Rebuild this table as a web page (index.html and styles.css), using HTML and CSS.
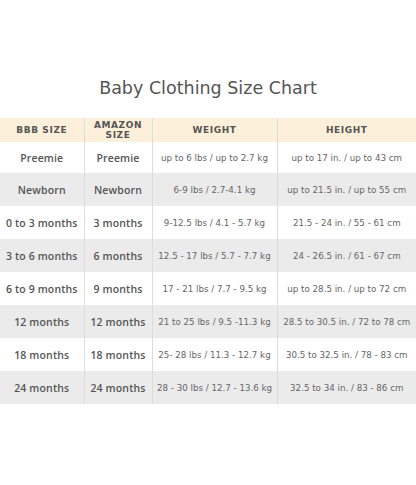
FILE: index.html
```html
<!DOCTYPE html>
<html>
<head>
<meta charset="utf-8">
<link rel="stylesheet" href="styles.css">
</head>
<body>
<div class="page">
  <h1 class="title">Baby Clothing Size Chart</h1>
  <table class="chart">
    <colgroup>
      <col class="c1"><col class="c2"><col class="c3"><col class="c4">
    </colgroup>
    <thead>
      <tr class="head">
        <th>BBB SIZE</th>
        <th>AMAZON<br>SIZE</th>
        <th>WEIGHT</th>
        <th>HEIGHT</th>
      </tr>
    </thead>
    <tbody>
      <tr class="first"><td class="sz">Preemie</td><td class="sz">Preemie</td><td>up to 6 lbs / up to 2.7 kg</td><td>up to 17 in. / up to 43 cm</td></tr>
      <tr class="alt"><td class="sz">Newborn</td><td class="sz">Newborn</td><td>6-9 lbs / 2.7-4.1 kg</td><td>up to 21.5 in. / up to 55 cm</td></tr>
      <tr><td class="sz">0 to 3 months</td><td class="sz">3 months</td><td>9-12.5 lbs / 4.1 - 5.7 kg</td><td>21.5 - 24 in. / 55 - 61 cm</td></tr>
      <tr class="alt"><td class="sz">3 to 6 months</td><td class="sz">6 months</td><td>12.5 - 17 lbs / 5.7 - 7.7 kg</td><td>24 - 26.5 in. / 61 - 67 cm</td></tr>
      <tr><td class="sz">6 to 9 months</td><td class="sz">9 months</td><td>17 - 21 lbs / 7.7 - 9.5 kg</td><td>up to 28.5 in. / up to 72 cm</td></tr>
      <tr class="alt"><td class="sz">12 months</td><td class="sz">12 months</td><td>21 to 25 lbs / 9.5 -11.3 kg</td><td>28.5 to 30.5 in. / 72 to 78 cm</td></tr>
      <tr><td class="sz">18 months</td><td class="sz">18 months</td><td>25- 28 lbs / 11.3 - 12.7 kg</td><td>30.5 to 32.5 in. / 78 - 83 cm</td></tr>
      <tr class="alt"><td class="sz">24 months</td><td class="sz">24 months</td><td>28 - 30 lbs / 12.7 - 13.6 kg</td><td>32.5 to 34 in. / 83 - 86 cm</td></tr>
    </tbody>
  </table>
</div>
</body>
</html>
```
FILE: styles.css
```css
html, body {
  margin: 0;
  padding: 0;
  background: #ffffff;
}
.page {
  width: 416px;
  height: 485px;
  font-family: "DejaVu Sans", "Open Sans", sans-serif;
  color: #555555;
}
.title {
  margin: 0;
  padding: 76px 0 18px;
  font-size: 17.5px;
  font-weight: normal;
  line-height: 24px;
  text-align: center;
  color: #555555;
}
.chart {
  width: 416px;
  border-collapse: collapse;
  table-layout: fixed;
}
.c1 { width: 84px; }
.c2 { width: 68px; }
.c3 { width: 125px; }
.c4 { width: 139px; }
.chart th,
.chart td {
  padding: 0;
  text-align: center;
  border-left: 1px solid #dcdcdc;
  white-space: nowrap;
  overflow: visible;
}
.chart th:first-child,
.chart td:first-child {
  border-left: none;
}
.head th {
  height: 24px;
  background: #fdf0da;
  font-size: 9px;
  line-height: 10px;
  font-weight: bold;
  letter-spacing: 0.6px;
  color: #555555;
}
.chart td {
  height: 33px;
  font-size: 8.7px;
  color: #666666;
}
.chart .first td {
  height: 31px;
}
.chart td.sz {
  font-family: "Open Sans", "DejaVu Sans", sans-serif;
  font-size: 10.5px;
  font-weight: 600;
  color: #555555;
  letter-spacing: 0.15px;
}
.alt td {
  background: #ebebeb;
}
```
